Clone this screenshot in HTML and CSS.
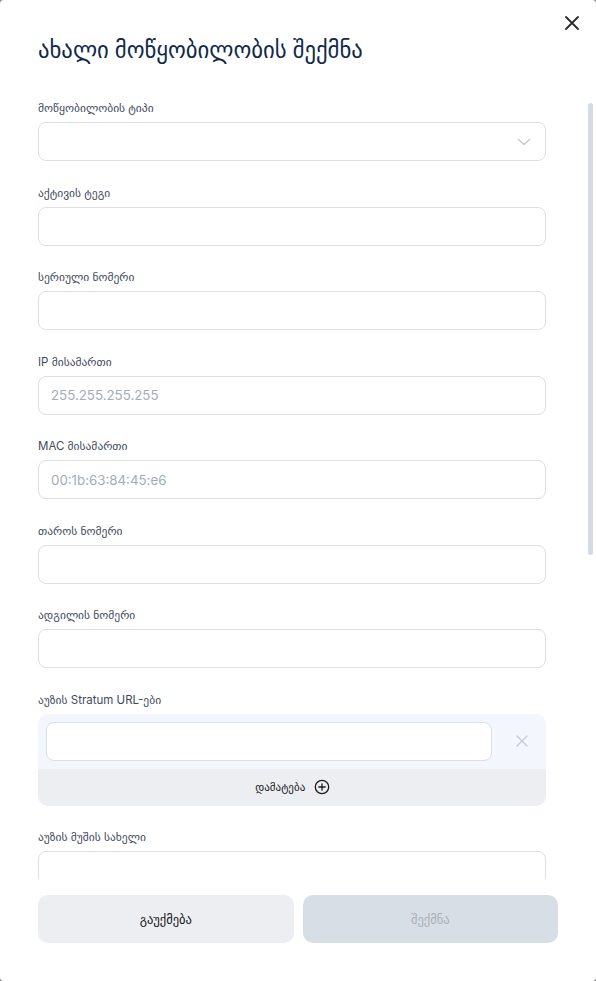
FILE: index.html
```html
<!DOCTYPE html>
<html lang="ka">
<head>
<meta charset="utf-8">
<title>ახალი მოწყობილობის შექმნა</title>
<link rel="stylesheet" href="styles.css">
</head>
<body>
<div class="modal">
  <header class="modal-header">
    <h1 class="modal-title">ახალი მოწყობილობის შექმნა</h1>
    <button class="close-btn" type="button" aria-label="დახურვა">
      <svg width="16" height="16" viewBox="0 0 16 16"><path d="M2 2L14 14M14 2L2 14" stroke="#2b2b2b" stroke-width="1.8" stroke-linecap="round"/></svg>
    </button>
  </header>
  <div class="modal-body">
    <div class="field">
      <label class="label">მოწყობილობის ტიპი</label>
      <div class="select">
        <svg class="chevron" width="14" height="8" viewBox="0 0 14 8"><path d="M1.5 1.5L7 6.5L12.5 1.5" fill="none" stroke="#c3c8cf" stroke-width="1.4" stroke-linecap="round" stroke-linejoin="round"/></svg>
      </div>
    </div>
    <div class="field">
      <label class="label">აქტივის ტეგი</label>
      <input class="input" type="text">
    </div>
    <div class="field">
      <label class="label">სერიული ნომერი</label>
      <input class="input" type="text">
    </div>
    <div class="field">
      <label class="label">IP მისამართი</label>
      <input class="input" type="text" placeholder="255.255.255.255">
    </div>
    <div class="field">
      <label class="label">MAC მისამართი</label>
      <input class="input" type="text" placeholder="00:1b:63:84:45:e6">
    </div>
    <div class="field">
      <label class="label">თაროს ნომერი</label>
      <input class="input" type="text">
    </div>
    <div class="field">
      <label class="label">ადგილის ნომერი</label>
      <input class="input" type="text">
    </div>
    <div class="field">
      <label class="label">აუზის Stratum URL-ები</label>
      <div class="url-box">
        <div class="url-row">
          <input class="input url-input" type="text">
          <button class="remove-btn" type="button" aria-label="წაშლა">
            <svg width="12" height="12" viewBox="0 0 12 12"><path d="M1 1L11 11M11 1L1 11" stroke="#c5cbd4" stroke-width="1.4" stroke-linecap="round"/></svg>
          </button>
        </div>
        <button class="add-btn" type="button">
          <span>დამატება</span>
          <svg width="16" height="16" viewBox="0 0 16 16"><circle cx="8" cy="8" r="6.7" fill="none" stroke="#1a1a1a" stroke-width="1.3"/><path d="M8 4.8V11.2M4.8 8H11.2" stroke="#1a1a1a" stroke-width="1.3" stroke-linecap="round"/></svg>
        </button>
      </div>
    </div>
    <div class="field">
      <label class="label">აუზის მუშის სახელი</label>
      <input class="input" type="text">
    </div>
  </div>
  <div class="scroll-thumb"></div>
  <footer class="modal-footer">
    <button class="btn btn-cancel" type="button">გაუქმება</button>
    <button class="btn btn-create" type="button" disabled>შექმნა</button>
  </footer>
</div>
</body>
</html>
```
FILE: styles.css
```css
* { box-sizing: border-box; }
html { background: #8a8a8a; }
body {
  margin: 0;
  font-family: "Inter", "DejaVu Sans", sans-serif;
}
.modal {
  position: relative;
  height: 981px;
  background: #fff;
  border-radius: 4px;
  display: flex;
  flex-direction: column;
  overflow: hidden;
}
.modal-header {
  height: 100px;
  flex: none;
  padding: 36px 38px 0;
}
.modal-title {
  margin: 0;
  font-size: 22.7px;
  line-height: 28px;
  font-weight: 500;
  color: #10294b;
}
.close-btn {
  position: absolute;
  top: 14px;
  right: 15px;
  width: 18px;
  height: 18px;
  padding: 1px;
  border: 0;
  background: none;
  display: flex;
  align-items: center;
  justify-content: center;
}
.modal-body {
  flex: 1;
  min-height: 0;
  overflow: hidden;
  padding: 0 50.5px 30px 38px;
  display: flex;
  flex-direction: column;
  gap: 23.5px;
}
.scroll-thumb {
  position: absolute;
  top: 103px;
  right: 3px;
  width: 5px;
  height: 452px;
  border-radius: 3px;
  background: #d4dbe2;
}
.field {
  display: flex;
  flex-direction: column;
  flex: none;
}
.label {
  font-size: 11.5px;
  line-height: 16px;
  font-weight: 400;
  color: #3e4a5c;
  margin-bottom: 6px;
}
.input, .select {
  height: 39px;
  width: 100%;
  border: 1px solid #dcdfe4;
  border-radius: 8px;
  background: #fff;
  padding: 0 12px;
  font-family: "Inter", "DejaVu Sans", sans-serif;
  font-size: 13.3px;
  color: #1f2937;
  outline: none;
}
.input::placeholder { color: #a3acb8; }
.select {
  display: flex;
  align-items: center;
  justify-content: flex-end;
  padding-right: 14px;
}
.url-box {
  background: #f3f6fc;
  border-radius: 10px;
  overflow: hidden;
  display: flex;
  flex-direction: column;
}
.url-row {
  display: flex;
  align-items: center;
  padding: 8px 0 8px 8px;
}
.url-input { flex: 1; width: auto; }
.remove-btn {
  width: 54px;
  height: 39px;
  flex: none;
  border: 0;
  background: none;
  display: flex;
  align-items: center;
  justify-content: center;
  padding: 0 0 0 6px;
}
.add-btn {
  height: 37px;
  border: 0;
  background: #eceef2;
  display: flex;
  align-items: center;
  justify-content: center;
  gap: 9px;
  font-family: "Inter", "DejaVu Sans", sans-serif;
  font-size: 11px;
  color: #1a1a1a;
  padding: 0 0 0 2px;
}
.modal-footer {
  flex: none;
  display: flex;
  gap: 9px;
  padding: 16px 38px 38px;
}
.btn {
  flex: 1;
  height: 48px;
  border: 0;
  border-radius: 10px;
  font-family: "Inter", "DejaVu Sans", sans-serif;
  font-size: 12.5px;
  font-weight: 400;
}
.btn-cancel { background: #eceef2; color: #111; }
.btn-create { background: #d8dee5; color: #a7afb9; }
```
